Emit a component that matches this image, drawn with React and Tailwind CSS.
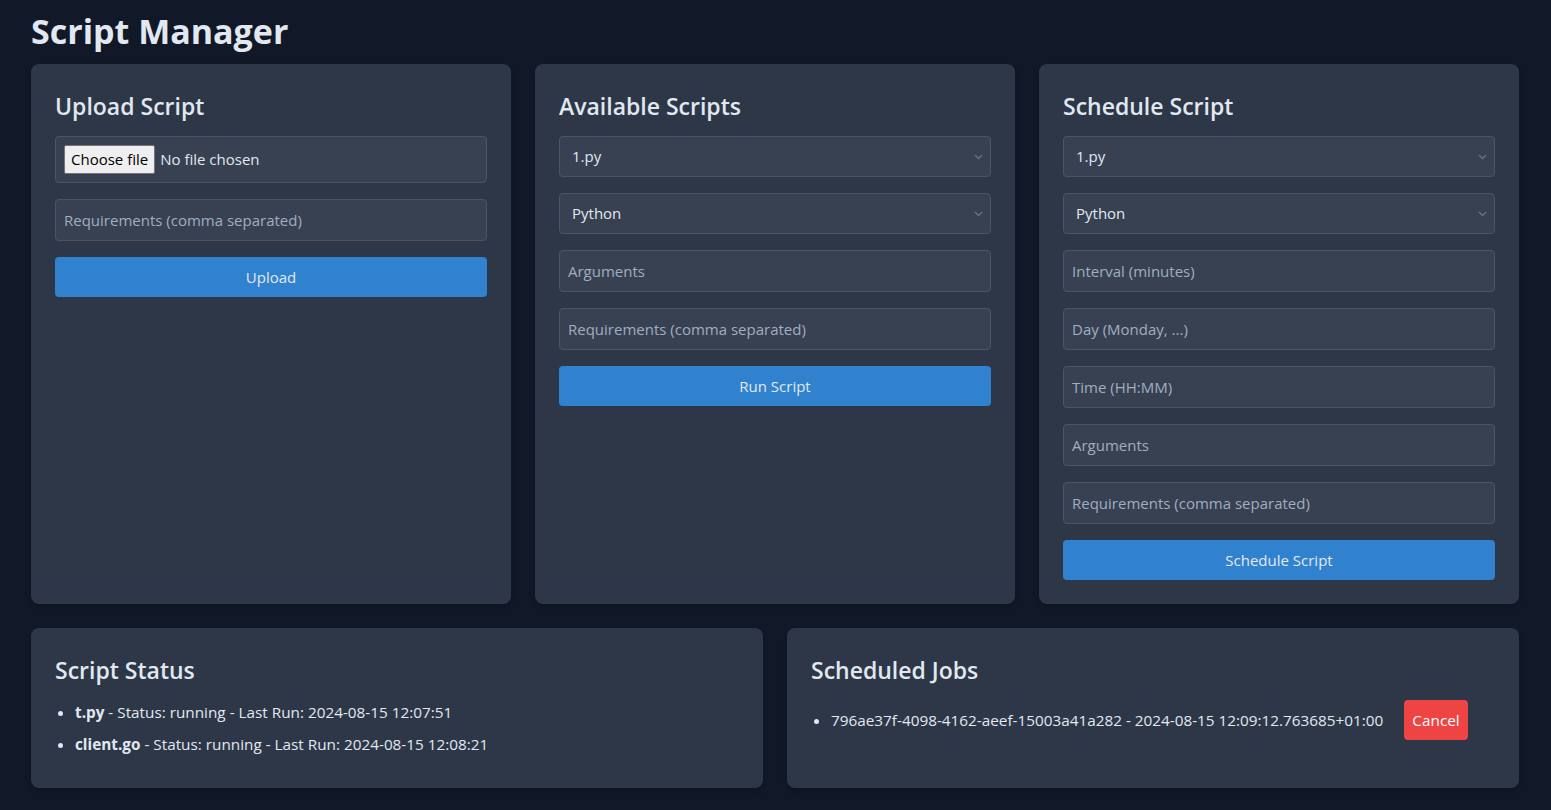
import React, { useState } from "react";

const scripts = ["1.py", "t.py", "client.go"];
const languages = ["Python", "Go", "Node.js"];

const statuses = [
  { name: "t.py", status: "running", lastRun: "2024-08-15 12:07:51" },
  { name: "client.go", status: "running", lastRun: "2024-08-15 12:08:21" },
];

const jobs = [
  { id: "796ae37f-4098-4162-aeef-15003a41a282", next: "2024-08-15 12:09:12.763685+01:00" },
];

function Card({ title, children }) {
  return (
    <div className="bg-[#2d3748] rounded-lg p-6 shadow-md">
      <h2 className="text-[23px] leading-8 font-semibold text-[#e2e8f0] pt-[2px] mb-[14px]">{title}</h2>
      {children}
    </div>
  );
}

function TextInput({ placeholder }) {
  return (
    <input
      type="text"
      placeholder={placeholder}
      className="w-full h-[42px] px-2 bg-[#374151] border border-[#4a5568] rounded text-[15px] text-[#e2e8f0] placeholder:text-[#a0aec0] outline-none"
    />
  );
}

function Select({ options }) {
  const [value, setValue] = useState(options[0]);
  return (
    <div className="relative">
      <select
        value={value}
        onChange={(e) => setValue(e.target.value)}
        className="w-full h-[41px] pl-3 pr-8 appearance-none bg-[#374151] border border-[#4a5568] rounded text-[15px] text-[#e2e8f0] outline-none"
      >
        {options.map((o) => (
          <option key={o} value={o}>
            {o}
          </option>
        ))}
      </select>
      <svg
        className="absolute right-[8px] top-1/2 -translate-y-1/2 pointer-events-none"
        width="9"
        height="6"
        viewBox="0 0 9 6"
        fill="none"
      >
        <path d="M1 1l3.5 3.5L8 1" stroke="#6b7280" strokeWidth="1.3" />
      </svg>
    </div>
  );
}

function FileInput() {
  const [name, setName] = useState(null);
  return (
    <label className="flex items-center w-full h-[47px] px-2 bg-[#374151] border border-[#4a5568] rounded text-[15px] text-[#e2e8f0] cursor-pointer">
      <input
        type="file"
        className="hidden"
        onChange={(e) => setName(e.target.files[0] ? e.target.files[0].name : null)}
      />
      <span className="h-[29px] px-[6px] flex items-center bg-[#efefef] text-black border border-[#767676] rounded-[2px]">
        Choose file
      </span>
      <span className="ml-[5px]">{name || "No file chosen"}</span>
    </label>
  );
}

function Button({ children }) {
  return (
    <button className="w-full h-10 bg-[#3182ce] hover:bg-[#2b6cb0] rounded text-[15px] text-[#e2e8f0]">
      {children}
    </button>
  );
}

export default function App() {
  return (
    <div
      className="min-h-screen bg-[#111827] pl-[31px] pr-[32px] pt-[9px] pb-6 text-[#e2e8f0]"
      style={{ fontFamily: '"Open Sans", "Noto Sans", sans-serif' }}
    >
      <h1 className="text-[34px] leading-[44px] font-bold text-[#e2e8f0] mb-[11px]">Script Manager</h1>

      <div className="grid grid-cols-3 gap-6">
        <Card title="Upload Script">
          <div className="flex flex-col gap-4">
            <FileInput />
            <TextInput placeholder="Requirements (comma separated)" />
            <Button>Upload</Button>
          </div>
        </Card>

        <Card title="Available Scripts">
          <div className="flex flex-col gap-4">
            <Select options={scripts} />
            <Select options={languages} />
            <TextInput placeholder="Arguments" />
            <TextInput placeholder="Requirements (comma separated)" />
            <Button>Run Script</Button>
          </div>
        </Card>

        <Card title="Schedule Script">
          <div className="flex flex-col gap-4">
            <Select options={scripts} />
            <Select options={languages} />
            <TextInput placeholder="Interval (minutes)" />
            <TextInput placeholder="Day (Monday, ...)" />
            <TextInput placeholder="Time (HH:MM)" />
            <TextInput placeholder="Arguments" />
            <TextInput placeholder="Requirements (comma separated)" />
            <Button>Schedule Script</Button>
          </div>
        </Card>
      </div>

      <div className="grid grid-cols-2 gap-6 mt-6">
        <Card title="Script Status">
          <ul className="list-disc pl-5 text-[15.3px] leading-6">
            {statuses.map((s) => (
              <li key={s.name} className="mb-2">
                <span className="font-bold">{s.name}</span> - Status: {s.status} - Last Run: {s.lastRun}
              </li>
            ))}
          </ul>
        </Card>

        <Card title="Scheduled Jobs">
          <ul className="list-disc pl-5 text-[15.3px] leading-6">
            {jobs.map((j) => (
              <li key={j.id} className="mb-2">
                <div className="flex items-center">
                  <span>
                    {j.id} - {j.next}
                  </span>
                  <button className="ml-[21px] h-10 px-2 bg-[#ef4444] rounded text-white">Cancel</button>
                </div>
              </li>
            ))}
          </ul>
        </Card>
      </div>
    </div>
  );
}
